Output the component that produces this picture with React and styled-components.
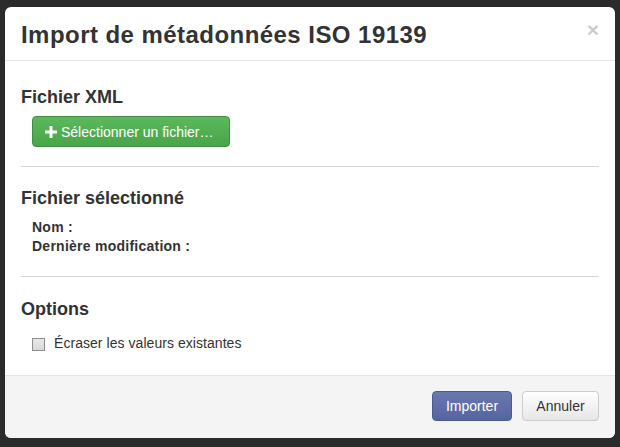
import React from 'react'
import styled, { createGlobalStyle } from 'styled-components'

const Global = createGlobalStyle`
body {
  margin: 0;
  background: #2b2b2b;
  font-family: "Liberation Sans", Arial, sans-serif;
  font-size: 14px;
  color: #333;
}
`

const Backdrop = styled.div`
width: 620px;
height: 447px;
padding: 7px 5px 0 5px;
box-sizing: border-box;
`

const Modal = styled.div`
width: 610px;
height: 431px;
background: #fff;
border-radius: 6px;
overflow: hidden;
display: flex;
flex-direction: column;
`

const Header = styled.div`
height: 53px;
padding: 0 16px;
border-bottom: 1px solid #e5e5e5;
display: flex;
align-items: center;
justify-content: space-between;
`

const Title = styled.h3`
margin: 2px 0 0 0;
font-size: 24px;
font-weight: bold;
line-height: 26px;
letter-spacing: 0.45px;
color: #333;
`

const Close = styled.span`
font-size: 21px;
font-weight: bold;
color: #000;
opacity: 0.2;
line-height: 1;
margin-top: -8px;
`

const Body = styled.div`
flex: 1;
padding: 26px 16px 0 16px;
`

const Heading = styled.h4`
margin: 0;
font-size: 18px;
font-weight: bold;
line-height: 20px;
color: #333;
`

const Indent = styled.div`
padding-left: 11px;
margin-top: ${p => p.top}px;
`

const Rule = styled.hr`
border: 0;
border-top: 1px solid #d4d4dc;
margin: ${p => p.top}px 0 ${p => p.bottom}px 0;
`

const BaseButton = styled.button`
font-family: "Liberation Sans", Arial, sans-serif;
font-size: 14px;
border-radius: 4px;
cursor: pointer;
display: inline-flex;
align-items: center;
box-sizing: border-box;
`

const GreenButton = styled(BaseButton)`
height: 31px;
width: 198px;
padding: 0 12px;
color: #fff;
border: 1px solid #3e8f3e;
background: linear-gradient(#5cb85c, #48a548);
gap: 4px;
`

const Label = styled.div`
font-weight: bold;
line-height: 19px;
letter-spacing: 0.25px;
`

const CheckRow = styled.label`
display: flex;
align-items: center;
gap: 9px;
line-height: 20px;
letter-spacing: 0.05px;
`

const Box = styled.span`
width: 11px;
height: 11px;
border: 1px solid #8f8f8f;
background: linear-gradient(#e8e8e8, #d8d8d8);
margin-top: 2px;
`

const Footer = styled.div`
height: 63px;
border-top: 1px solid #e5e5e5;
background: #f4f4f4;
padding: 15px 16px 0 16px;
box-sizing: border-box;
display: flex;
justify-content: flex-end;
gap: 10px;
`

const Action = styled(BaseButton)`
height: 30px;
padding: 0 12px;
justify-content: center;
width: ${p => p.w}px;
color: ${p => (p.primary ? '#fff' : '#333')};
border: 1px solid ${p => (p.primary ? '#4b5a90' : '#ccc')};
background: ${p => (p.primary ? 'linear-gradient(#6a78b0, #5565a0)' : 'linear-gradient(#fff, #e6e6e6)')};
`

const Plus = () => (
  <svg width="12" height="12" viewBox="0 0 12 12">
    <path d="M4.5 0h3v4.5H12v3H7.5V12h-3V7.5H0v-3h4.5z" fill="#fff" />
  </svg>
)

const App = () => {
  return (
    <Backdrop>
      <Global />
      <Modal>
        <Header>
          <Title>Import de métadonnées ISO 19139</Title>
          <Close>×</Close>
        </Header>
        <Body>
          <Heading>Fichier XML</Heading>
          <Indent top={9}>
            <GreenButton>
              <Plus /> Sélectionner un fichier…
            </GreenButton>
          </Indent>
          <Rule top={19} bottom={21} />
          <Heading>Fichier sélectionné</Heading>
          <Indent top={10}>
            <Label>Nom :</Label>
            <Label>Dernière modification :</Label>
          </Indent>
          <Rule top={20} bottom={22} />
          <Heading>Options</Heading>
          <Indent top={14}>
            <CheckRow>
              <Box />
              Écraser les valeurs existantes
            </CheckRow>
          </Indent>
        </Body>
        <Footer>
          <Action primary w={80}>Importer</Action>
          <Action w={77}>Annuler</Action>
        </Footer>
      </Modal>
    </Backdrop>
  )
}

export default App
